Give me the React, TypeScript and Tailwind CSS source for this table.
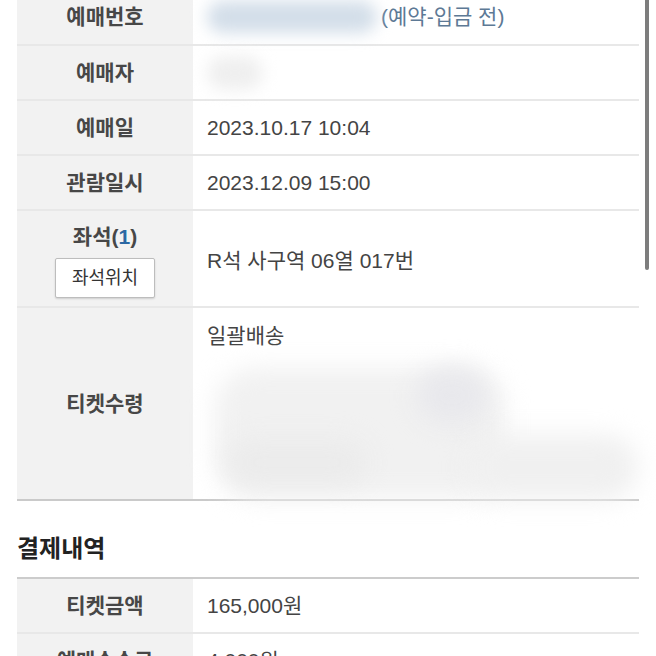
import React from "react";

interface Row {
  label: React.ReactNode;
  value: React.ReactNode;
  height: string;
}

const font = "font-['Liberation_Sans','Noto_Sans_CJK_KR',sans-serif]";

const InfoRow = ({ label, value, height }: Row) => (
  <div className={`flex border-b-2 border-[#e8e8e8] ${height}`}>
    <div className="w-[176px] shrink-0 bg-[#f2f2f2] flex flex-col items-center justify-center text-[21px] font-bold text-[#474747]">
      {label}
    </div>
    <div className="flex-1 flex items-center pl-[14px] text-[21px] text-[#444]">
      {value}
    </div>
  </div>
);

const App = () => {
  return (
    <div className={`${font} relative w-[656px] h-[656px] overflow-hidden bg-white`}>
      <div className="absolute right-[7px] top-0 w-[4px] h-[270px] rounded-b-full bg-[#7d7d7d]" />

      <div className="mx-[17px] w-[622px] -mt-[11px]">
        <InfoRow
          height="h-[57px]"
          label="예매번호"
          value={
            <>
              <div className="w-[170px] h-[32px] mr-[4px] rounded-full bg-[#d3dee9] blur-[8px]" />
              <span className="text-[#5d7995]">(예약-입금 전)</span>
            </>
          }
        />
        <InfoRow
          height="h-[55px]"
          label="예매자"
          value={<div className="w-[56px] h-[34px] rounded-full bg-[#efefef] blur-[8px]" />}
        />
        <InfoRow height="h-[55px]" label="예매일" value="2023.10.17 10:04" />
        <InfoRow height="h-[55px]" label="관람일시" value="2023.12.09 15:00" />
        <InfoRow
          height="h-[97px]"
          label={
            <>
              <div className="mt-[2px]">
                좌석(<span className="text-[#2b68a3]">1</span>)
              </div>
              <button className="mt-[6px] w-[100px] h-[40px] bg-white border border-[#bdbdbd] rounded-[2px] shadow-[0_1px_2px_rgba(0,0,0,0.15)] text-[18px] font-normal text-[#333]">
                좌석위치
              </button>
            </>
          }
          value={<span className="mt-[4px]">R석 사구역 06열 017번</span>}
        />
        <div className="flex h-[193px] border-b-2 border-[#cacaca]">
          <div className="w-[176px] shrink-0 bg-[#f2f2f2] flex items-center justify-center text-[21px] font-bold text-[#474747]">
            티켓수령
          </div>
          <div className="flex-1 flex flex-col pl-[14px] pt-[12px] text-[21px] text-[#444]">
            <span>일괄배송</span>
            <div className="relative flex-1 mt-[8px]">
              <div className="absolute left-[8px] top-[8px] w-[290px] h-[130px] rounded-[40px] bg-[#f1f1f1] blur-[12px]" />
              <div className="absolute left-[210px] top-[8px] w-[70px] h-[55px] rounded-full bg-[#e8e8ec] blur-[12px]" />
              <div className="absolute left-[260px] top-[75px] w-[170px] h-[65px] rounded-[30px] bg-[#f0f0f0] blur-[12px]" />
              <div className="absolute left-[20px] top-[80px] w-[140px] h-[45px] rounded-full bg-[#ebebeb] blur-[12px]" />
            </div>
          </div>
        </div>
      </div>

      <div className="mx-[17px] mt-[30px] text-[24px] font-bold text-[#222]">결제내역</div>

      <div className="mx-[17px] w-[622px] mt-[10px] border-t-2 border-[#cccccc]">
        <InfoRow height="h-[55px]" label="티켓금액" value="165,000원" />
        <InfoRow height="h-[55px]" label="예매수수료" value="4,000원" />
      </div>
    </div>
  );
};

export default App;
